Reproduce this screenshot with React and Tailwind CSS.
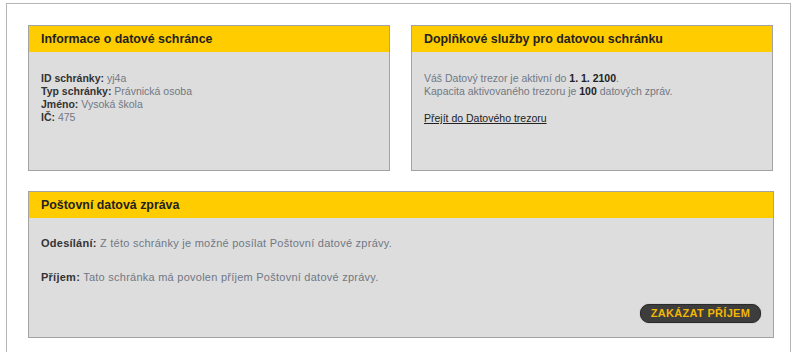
import React from "react";

// Box with yellow title bar and gray body
const Panel = ({ title, className = "", bodyClassName = "", children }) => (
  <div className={`border border-[#a3a3a3] bg-[#dddddd] flex flex-col ${className}`}>
    <div className="h-[26px] bg-[#ffcc00] flex items-center px-[12px]">
      <h2 className="text-[12.4px] font-bold text-[#222]">{title}</h2>
    </div>
    <div className={`px-[12px] leading-[13px] flex-1 ${bodyClassName}`}>{children}</div>
  </div>
);

const Row = ({ label, value }) => (
  <div>
    <span className="font-bold text-[#333]">{label}:</span>{" "}
    <span className="text-[#717884]">{value}</span>
  </div>
);

export default function App() {
  return (
    <div
      className="w-[800px] h-[352px] bg-white overflow-hidden pt-[3px] pl-[6px] pr-[9px]"
      style={{ fontFamily: '"Liberation Sans", Arial, sans-serif' }}
    >
      <div className="h-full border-l border-t border-r border-[#b5b5b5] pt-[21px] pl-[21px] pr-[17px]">
        <div className="flex gap-[21px]">
          <Panel title="Informace o datové schránce" className="w-[362px] h-[146px]" bodyClassName="pt-[20px] text-[10.5px]">
            <Row label="ID schránky" value="yj4a" />
            <Row label="Typ schránky" value="Právnická osoba" />
            <Row label="Jméno" value="Vysoká škola" />
            <Row label="IČ" value="475" />
          </Panel>

          <Panel title="Doplňkové služby pro datovou schránku" className="w-[362px] h-[146px]" bodyClassName="pt-[20px] text-[10.5px] text-[#717884]">
            <p>
              Váš Datový trezor je aktivní do <b className="text-[#222]">1. 1. 2100</b>.
            </p>
            <p>
              Kapacita aktivovaného trezoru je <b className="text-[#222]">100</b> datových zpráv.
            </p>
            <a href="#" className="block mt-[14px] text-[#222] underline">
              Přejít do Datového trezoru
            </a>
          </Panel>
        </div>

        <Panel title="Poštovní datová zpráva" className="mt-[20px] w-[746px] h-[147px]" bodyClassName="pt-[19px] pb-[14px] flex flex-col text-[11px] tracking-[0.25px]">
          <Row label="Odesílání" value="Z této schránky je možné posílat Poštovní datové zprávy." />
          <div className="mt-[21px]">
            <Row label="Příjem" value="Tato schránka má povolen příjem Poštovní datové zprávy." />
          </div>
          <div className="mt-auto flex justify-end">
            <button className="w-[121px] h-[19px] rounded-[9px] bg-[#3d3d3d] border border-[#2a2a2a] shadow-[0_0_1px_rgba(0,0,0,0.5)] text-[11px] font-bold text-[#f2b705] tracking-[0.3px] uppercase">
              Zakázat příjem
            </button>
          </div>
        </Panel>
      </div>
    </div>
  );
}
